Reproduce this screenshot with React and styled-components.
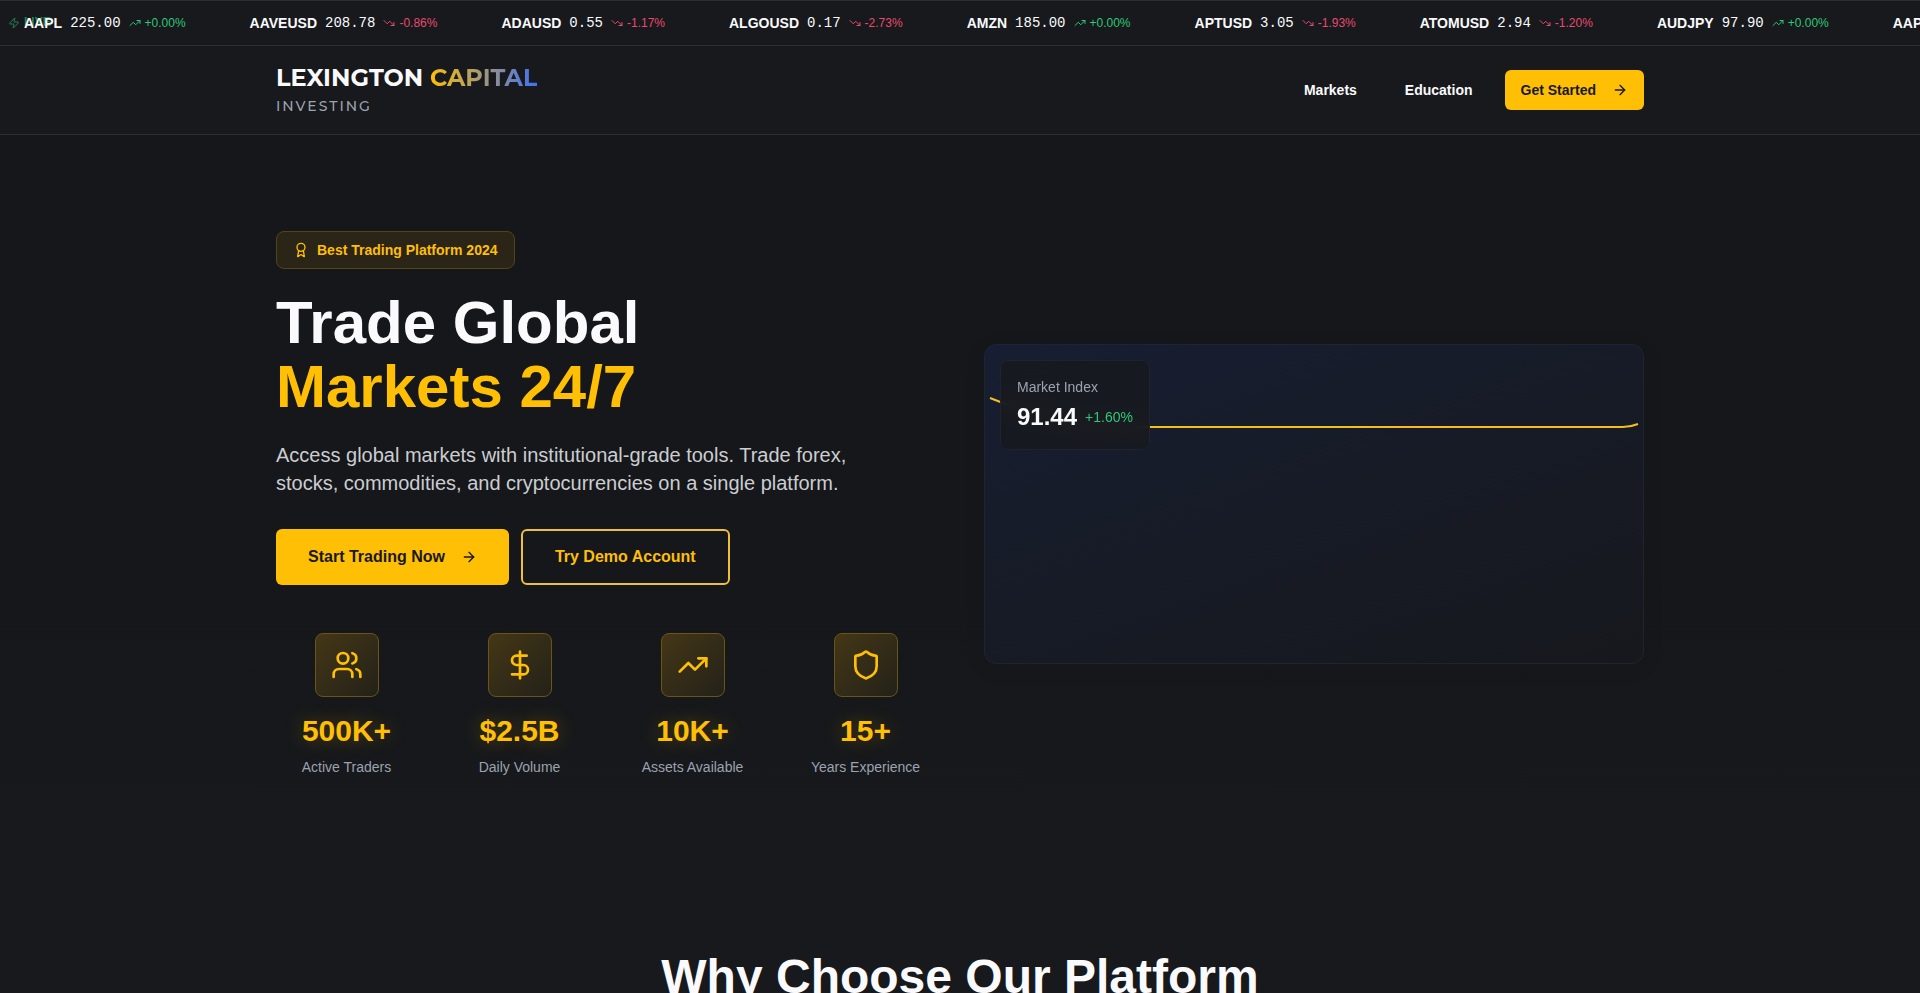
import React from 'react';
import styled, { createGlobalStyle, css } from 'styled-components';
import { ArrowRight, Award, DollarSign, Shield, TrendingDown, TrendingUp, Users, Zap } from 'lucide-react';

const color = {
  gold: '#ffbf05',
  line: '#2c2e33',
  surface: '#17191c',
  page: '#15171a',
  text: '#fafafc',
  muted: '#9ca3af',
  up: '#2ec877',
  down: '#e64a6f',
};

const GlobalStyle = createGlobalStyle`
  *, *::before, *::after { box-sizing: border-box; }
  html { overflow-x: hidden; }
  body {
    margin: 0;
    overflow: hidden;
    background: ${color.surface};
    color: ${color.text};
    font-family: "Liberation Sans", Arial, sans-serif;
    font-size: 16px;
    line-height: 24px;
  }
  h1, h2, p, dl, dd, ul { margin: 0; padding: 0; }
  ul { list-style: none; }
  button { font: inherit; cursor: pointer; }
`;

const Container = styled.div`
  width: 100%;
  max-width: 1400px;
  margin: 0 auto;
  padding: 0 16px;
`;

const TickerBar = styled.section`
  position: relative;
  overflow: hidden;
  background: ${color.surface};
  border-top: 1px solid ${color.line};
  border-bottom: 1px solid ${color.line};
`;

const LiveTag = styled.span`
  position: absolute;
  inset: 0 auto 0 8px;
  display: flex;
  align-items: center;
  gap: 4px;
  color: ${color.up};
  font-size: 12px;
  opacity: 0.6;
`;

const LiveLabel = styled.span`
  padding-bottom: 3px;
  font-weight: 600;
`;

const TickerTrack = styled.ul`
  position: relative;
  display: flex;
  gap: 64px;
  width: max-content;
  padding: 10px 24px;
`;

const TickerItem = styled.li`
  display: flex;
  align-items: center;
  gap: 8px;
  font-size: 14px;
  white-space: nowrap;
`;

const Price = styled.span`
  font-family: "Liberation Mono", monospace;
`;

const Change = styled.span`
  display: flex;
  align-items: center;
  gap: 4px;
  font-size: 12px;
  color: ${(p) => (p.$down ? color.down : color.up)};
`;

const Header = styled.header`
  background: ${color.surface};
  border-bottom: 1px solid ${color.line};
`;

const HeaderRow = styled(Container)`
  display: flex;
  align-items: center;
  justify-content: space-between;
  min-height: 88px;
`;

const Brand = styled.a`
  display: flex;
  flex-direction: column;
  color: ${color.text};
  font-family: Montserrat, Lato, sans-serif;
  text-decoration: none;
`;

const BrandName = styled.span`
  font-size: 24px;
  line-height: 32px;
  font-weight: 700;
`;

const BrandAccent = styled.span`
  font-weight: 700;
  background: linear-gradient(90deg, ${color.gold}, #4070f4);
  background-clip: text;
  color: transparent;
`;

const BrandTag = styled.span`
  font-size: 14px;
  line-height: 24px;
  font-weight: 500;
  letter-spacing: 2px;
  color: ${color.muted};
`;

const Nav = styled.nav`
  display: flex;
  align-items: center;
  gap: 16px;
`;

const NavLink = styled.a`
  padding: 8px 16px;
  color: ${color.text};
  font-size: 14px;
  font-weight: 600;
  text-decoration: none;
`;

const sizes = {
  small: css`
    height: 40px;
    padding: 0 16px;
    font-size: 14px;
  `,
  large: css`
    height: 56px;
    padding: 0 32px;
    font-size: 16px;
  `,
};

const Button = styled.button`
  display: inline-flex;
  align-items: center;
  gap: 16px;
  border: ${(p) => (p.$outline ? `2px solid #efbe3c` : '0')};
  border-radius: 6px;
  background: ${(p) => (p.$outline ? 'transparent' : color.gold)};
  color: ${(p) => (p.$outline ? color.gold : '#17191c')};
  font-weight: 600;
  white-space: nowrap;
  ${(p) => sizes[p.$size]}
`;

const Hero = styled.section`
  padding: 96px 0;
  background: linear-gradient(180deg, ${color.page} 60%, ${color.surface});
`;

const HeroGrid = styled(Container)`
  display: grid;
  grid-template-columns: 1fr 1fr;
  align-items: center;
  gap: 48px;
`;

const Badge = styled.p`
  display: flex;
  align-items: center;
  gap: 8px;
  width: fit-content;
  height: 38px;
  padding: 0 16px;
  border: 1px solid #524416;
  border-radius: 8px;
  background: #2b2518;
  color: ${color.gold};
  font-size: 14px;
  font-weight: 600;
`;

const Title = styled.h1`
  margin-top: 22px;
  font-size: 60px;
  line-height: 64px;
  font-weight: 700;
`;

const TitleAccent = styled.span`
  display: block;
  color: ${color.gold};
`;

const Lead = styled.p`
  max-width: 600px;
  margin-top: 22px;
  color: #cccdd1;
  font-size: 20px;
  line-height: 28px;
`;

const Actions = styled.div`
  display: flex;
  gap: 12px;
  margin-top: 32px;
`;

const Stats = styled.dl`
  display: grid;
  grid-template-columns: repeat(4, 1fr);
  gap: 32px;
  margin-top: 48px;
`;

const Stat = styled.div`
  display: flex;
  flex-direction: column;
  align-items: center;
`;

const StatIcon = styled.dd`
  display: grid;
  place-items: center;
  width: 64px;
  height: 64px;
  border: 1px solid #6a5517;
  border-radius: 8px;
  background: linear-gradient(135deg, #443716, #232119);
  color: ${color.gold};
`;

const StatValue = styled.dd`
  margin-top: 16px;
  color: ${color.gold};
  font-size: 30px;
  line-height: 36px;
  font-weight: 700;
  text-shadow: 0 0 20px rgba(255, 191, 5, 0.3);
`;

const StatLabel = styled.dt`
  order: 1;
  margin-top: 8px;
  color: ${color.muted};
  font-size: 14px;
  line-height: 20px;
  white-space: nowrap;
`;

const ChartCard = styled.figure`
  position: relative;
  height: 320px;
  margin: 0;
  overflow: hidden;
  border: 1px solid #1f242e;
  border-radius: 12px;
  background: linear-gradient(160deg, #171e33, #171b26 50%, #16181d);
  box-shadow: 0 4px 24px rgba(0, 0, 0, 0.06);
`;

const ChartSvg = styled.svg`
  display: block;
  width: 100%;
  height: 100%;
`;

const IndexPanel = styled.figcaption`
  position: absolute;
  top: 15px;
  left: 15px;
  padding: 16px;
  border: 1px solid #20232c;
  border-radius: 8px;
  background: rgba(23, 25, 31, 0.9);
  backdrop-filter: blur(8px);
`;

const IndexName = styled.div`
  color: ${color.muted};
  font-size: 14px;
  line-height: 20px;
`;

const IndexRow = styled.div`
  display: flex;
  align-items: center;
  gap: 8px;
  margin-top: 4px;
  color: ${color.up};
  font-size: 14px;
  line-height: 32px;
`;

const IndexValue = styled.strong`
  color: ${color.text};
  font-size: 24px;
`;

const Features = styled.section`
  padding: 76px 0;
  background: ${color.surface};
`;

const SectionTitle = styled.h2`
  font-size: 48px;
  line-height: 56px;
  font-weight: 700;
  text-align: center;
`;

const quotes = [
  ['AAPL', '225.00', '+0.00%'],
  ['AAVEUSD', '208.78', '-0.86%'],
  ['ADAUSD', '0.55', '-1.17%'],
  ['ALGOUSD', '0.17', '-2.73%'],
  ['AMZN', '185.00', '+0.00%'],
  ['APTUSD', '3.05', '-1.93%'],
  ['ATOMUSD', '2.94', '-1.20%'],
  ['AUDJPY', '97.90', '+0.00%'],
  ['AAPL', '225.00', '+0.00%'],
];

const stats = [
  [Users, '500K+', 'Active Traders'],
  [DollarSign, '$2.5B', 'Daily Volume'],
  [TrendingUp, '10K+', 'Assets Available'],
  [Shield, '15+', 'Years Experience'],
];

function Ticker() {
  return (
    <TickerBar aria-label="Live prices">
      <LiveTag><Zap size={12} /><LiveLabel>LIVE</LiveLabel></LiveTag>
      <TickerTrack>
        {quotes.map(([symbol, price, change], i) => {
          const down = change.startsWith('-');
          const Trend = down ? TrendingDown : TrendingUp;
          return (
            <TickerItem key={i}>
              <strong>{symbol}</strong>
              <Price>{price}</Price>
              <Change $down={down}><Trend size={12} />{change}</Change>
            </TickerItem>
          );
        })}
      </TickerTrack>
    </TickerBar>
  );
}

function MarketChart() {
  return (
    <ChartCard>
      <ChartSvg viewBox="0 0 658 318" preserveAspectRatio="none" role="img" aria-label="Market index chart">
        <path
          d="M5 53 L18 58 C60 74 105 82 165 82 H638 C643 82 648 81 653 79"
          fill="none"
          stroke="#f7bd1d"
          strokeWidth="2"
        />
      </ChartSvg>
      <IndexPanel>
        <IndexName>Market Index</IndexName>
        <IndexRow><IndexValue>91.44</IndexValue>+1.60%</IndexRow>
      </IndexPanel>
    </ChartCard>
  );
}

export default function App() {
  return (
    <>
      <GlobalStyle />
      <Ticker />
      <Header>
        <HeaderRow>
          <Brand href="#">
            <BrandName>LEXINGTON <BrandAccent>CAPITAL</BrandAccent></BrandName>
            <BrandTag>INVESTING</BrandTag>
          </Brand>
          <Nav>
            <NavLink href="#markets">Markets</NavLink>
            <NavLink href="#education">Education</NavLink>
            <Button $size="small">Get Started<ArrowRight size={16} /></Button>
          </Nav>
        </HeaderRow>
      </Header>
      <main>
        <Hero>
          <HeroGrid>
            <div>
              <Badge><Award size={16} />Best Trading Platform 2024</Badge>
              <Title>Trade Global<TitleAccent>Markets 24/7</TitleAccent></Title>
              <Lead>
                Access global markets with institutional-grade tools. Trade forex, stocks,
                commodities, and cryptocurrencies on a single platform.
              </Lead>
              <Actions>
                <Button $size="large">Start Trading Now<ArrowRight size={16} /></Button>
                <Button $size="large" $outline>Try Demo Account</Button>
              </Actions>
              <Stats>
                {stats.map(([Icon, value, label]) => (
                  <Stat key={label}>
                    <StatLabel>{label}</StatLabel>
                    <StatIcon><Icon size={32} /></StatIcon>
                    <StatValue>{value}</StatValue>
                  </Stat>
                ))}
              </Stats>
            </div>
            <MarketChart />
          </HeroGrid>
        </Hero>
        <Features>
          <Container><SectionTitle>Why Choose Our Platform</SectionTitle></Container>
        </Features>
      </main>
    </>
  );
}
